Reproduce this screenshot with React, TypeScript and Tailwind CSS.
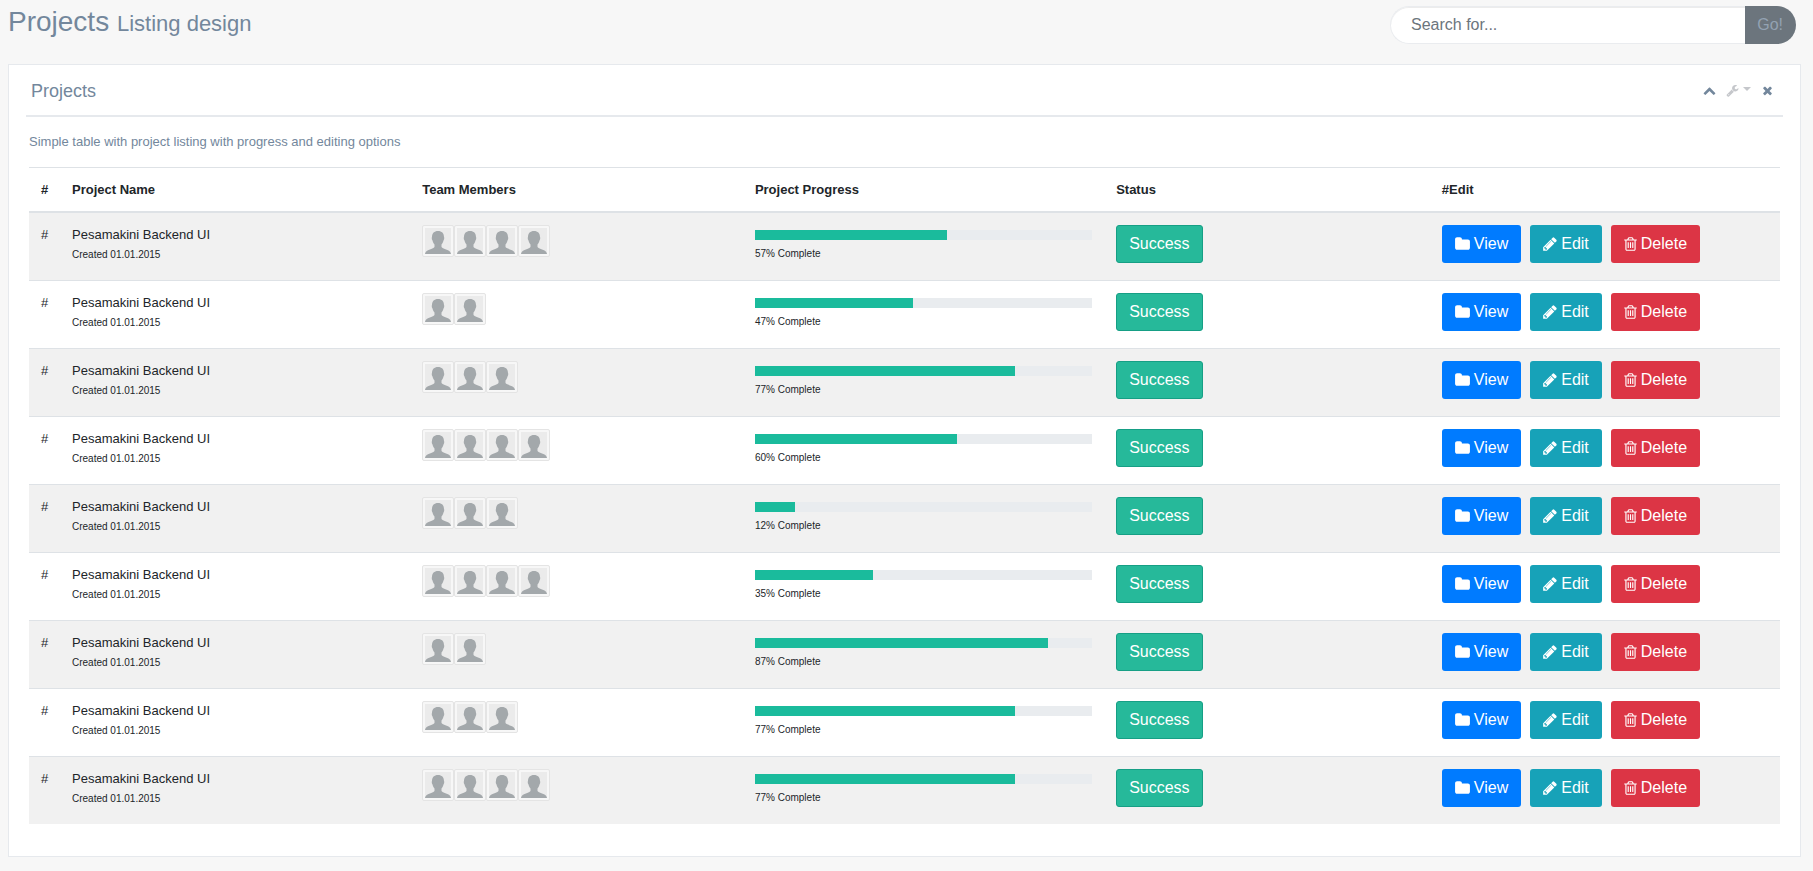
import React from "react";

type IconProps = { viewBox: string; path: string; className?: string };

function Glyph({ viewBox, path, className }: IconProps) {
  return (
    <svg viewBox={viewBox} className={className} fill="currentColor" aria-hidden="true">
      <path d={path} />
    </svg>
  );
}

const FOLDER =
  "M1728 608v704q0 92-66 158t-158 66h-1216q-92 0-158-66t-66-158v-960q0-92 66-158t158-66h320q92 0 158 66t66 158v32h672q92 0 158 66t66 158z";
const PENCIL =
  "M491 1536l91-91-235-235-91 91v107h128v128h107zm523-928q0-22-22-22-10 0-17 7l-542 542q-7 7-7 17 0 22 22 22 10 0 17-7l542-542q7-7 7-17zm-54-192l416 416-832 832h-416v-416zm683 96q0 53-37 90l-166 166-416-416 166-165q36-38 90-38 53 0 91 38l235 234q37 39 37 91z";
const TRASH =
  "M704 736v576q0 14-9 23t-23 9h-64q-14 0-23-9t-9-23v-576q0-14 9-23t23-9h64q14 0 23 9t9 23zm256 0v576q0 14-9 23t-23 9h-64q-14 0-23-9t-9-23v-576q0-14 9-23t23-9h64q14 0 23 9t9 23zm256 0v576q0 14-9 23t-23 9h-64q-14 0-23-9t-9-23v-576q0-14 9-23t23-9h64q14 0 23 9t9 23zm128 724v-948h-896v948q0 22 7 40.5t14.5 27 10.5 8.5h832q3 0 10.5-8.5t14.5-27 7-40.5zm-672-1076h448l-48-117q-7-9-17-11h-317q-10 2-17 11zm928 32v64q0 14-9 23t-23 9h-96v948q0 83-47 143.5t-113 60.5h-832q-66 0-113-58.5t-47-141.5v-952h-96q-14 0-23-9t-9-23v-64q0-14 9-23t23-9h309l70-167q15-37 54-63t79-26h320q40 0 79 26t54 63l70 167h309q14 0 23 9t9 23z";
const CHEVRON_UP =
  "M1683 1331l-166 165q-19 19-45 19t-45-19l-531-531-531 531q-19 19-45 19t-45-19l-166-165q-19-19-19-45.5t19-45.5l742-741q19-19 45-19t45 19l742 741q19 19 19 45.5t-19 45.5z";
const WRENCH =
  "M448 1472q0-26-19-45t-45-19-45 19-19 45 19 45 45 19 45-19 19-45zm644-420l-682 682q-37 37-90 37-52 0-91-37l-106-108q-38-36-38-90 0-53 38-91l681-681q39 98 114.5 173.5t173.5 114.5zm634-435q0 39-23 106-47 134-164.5 217.5t-258.5 83.5q-185 0-316.5-131.5t-131.5-316.5 131.5-316.5 316.5-131.5q58 0 121.5 16.5t107.5 46.5q16 11 16 28t-16 28l-293 169v224l193 107q5-3 79-48.5t135.5-81 70.5-35.5q15 0 23.5 10t8.5 25z";
const TIMES =
  "M1490 1322q0 40-28 68l-136 136q-28 28-68 28t-68-28l-294-294-294 294q-28 28-68 28t-68-28l-136-136q-28-28-28-68t28-68l294-294-294-294q-28-28-28-68t28-68l136-136q28-28 68-28t68 28l294 294 294-294q28-28 68-28t68 28l136 136q28 28 28 68t-28 68l-294 294 294 294q28 28 28 68z";

type Project = { members: number; progress: number };

const projects: Project[] = [
  { members: 4, progress: 57 },
  { members: 2, progress: 47 },
  { members: 3, progress: 77 },
  { members: 4, progress: 60 },
  { members: 3, progress: 12 },
  { members: 4, progress: 35 },
  { members: 2, progress: 87 },
  { members: 3, progress: 77 },
  { members: 4, progress: 77 },
];

function Avatar() {
  return (
    <li className="size-8 rounded-xs border border-[#e4e4e4] bg-[#f7f7f7] p-0.5">
      <svg viewBox="0 0 26 26" className="block size-full bg-[#ebebeb]" role="img" aria-label="Avatar">
        <path
          fill="#a3a8ab"
          d="M13 3C16.8 3 19 5.3 19 9C19.4 9.4 19.3 11.5 18.6 12.2C18.2 14 17.3 15.6 16.5 16.6V19C17.5 20.6 20.5 20.9 23 22.2C25 23.2 25.8 24.5 26 26H0C.2 24.5 1 23.2 3 22.2C5.5 20.9 8.5 20.6 9.5 19V16.6C8.7 15.6 7.8 14 7.4 12.2C6.7 11.5 6.6 9.4 7 9C7 5.3 9.2 3 13 3Z"
        />
      </svg>
    </li>
  );
}

const button =
  "inline-flex h-[38px] items-center gap-1 rounded-[3px] text-base leading-6 whitespace-nowrap text-white";

function ProjectRow({ project }: { project: Project }) {
  return (
    <tr className="align-top odd:bg-[#f1f1f1] not-first:[&>td]:border-t not-first:[&>td]:border-[#dee2e6] [&>td]:p-3">
      <td>#</td>
      <td>
        <a href="#project" className="block">Pesamakini Backend UI</a>
        <small className="mt-px block text-[10px] leading-[19px]">Created 01.01.2015</small>
      </td>
      <td>
        <ul className="flex">
          {Array.from({ length: project.members }, (_, i) => (
            <Avatar key={i} />
          ))}
        </ul>
      </td>
      <td>
        <div className="mt-[5px] mb-1 h-2.5 bg-[#e9ecef]">
          <div className="h-full bg-[#1abb9c]" style={{ width: `${project.progress}%` }} />
        </div>
        <small className="block text-[10px] leading-[19px]">{project.progress}% Complete</small>
      </td>
      <td>
        <button type="button" className={`${button} border border-[#169f85] bg-[#26b99a] px-3`}>
          Success
        </button>
      </td>
      <td>
        <div className="mb-[5px] flex gap-[9px]">
          <button type="button" className={`${button} bg-[#007bff] px-[13px]`}>
            <Glyph viewBox="64 0 1664 1792" path={FOLDER} className="h-4 w-[15px]" />
            View
          </button>
          <button type="button" className={`${button} bg-[#17a2b8] px-[13px]`}>
            <Glyph viewBox="128 0 1536 1792" path={PENCIL} className="h-4 w-3.5" />
            Edit
          </button>
          <button type="button" className={`${button} bg-[#dc3545] px-[13px]`}>
            <Glyph viewBox="192 0 1408 1792" path={TRASH} className="h-4 w-[13px]" />
            Delete
          </button>
        </div>
      </td>
    </tr>
  );
}

export default function App() {
  return (
    <main className="min-h-screen bg-[#f7f7f7] pr-3 pb-3 pl-2 font-['Liberation_Sans',Arial,sans-serif] text-[13px] leading-[19px] text-[#73879c]">
      <header className="flex h-16 items-start justify-between pt-1.5 pr-[5px]">
        <h1 className="text-[28px] leading-8">
          Projects <small className="text-[22px]">Listing design</small>
        </h1>
        <form className="flex w-[406px]" onSubmit={(e) => e.preventDefault()}>
          <input
            type="text"
            aria-label="Search for"
            placeholder="Search for..."
            className="h-[38px] min-w-0 flex-1 rounded-l-full border border-r-0 border-[#eaecef] bg-white pl-5 text-base shadow-[inset_0_1px_0_rgba(0,0,0,0.075)] outline-none placeholder:text-[#6c757d]"
          />
          <button type="submit" className="h-[38px] rounded-r-full bg-[#6c757d] pr-[13px] pl-3 text-base text-[#93a2b2]">
            Go!
          </button>
        </form>
      </header>

      <section className="border border-[#e6e9ed] bg-white px-[17px] pt-2.5 pb-4">
        <div className="flex h-[42px] items-start justify-between border-b-2 border-[#e6e9ed] px-[5px]">
          <h2 className="pt-1 text-lg leading-6">Projects</h2>
          <div className="flex items-center pt-[9px] pr-1">
            <button type="button" aria-label="Collapse">
              <Glyph viewBox="0 0 1792 1792" path={CHEVRON_UP} className="size-[13px]" />
            </button>
            <button type="button" aria-label="Settings" className="ml-2.5 flex items-center gap-1 text-[#c5c7cb]">
              <Glyph viewBox="0 0 1792 1792" path={WRENCH} className="size-[13px]" />
              <svg viewBox="0 0 8 4" className="mb-1 h-1 w-2" fill="currentColor" aria-hidden="true">
                <path d="M0 0H8L4 4Z" />
              </svg>
            </button>
            <button type="button" aria-label="Close" className="ml-2.5">
              <Glyph viewBox="0 0 1792 1792" path={TIMES} className="size-[13px]" />
            </button>
          </div>
        </div>

        <div className="px-[3px] pt-[15px]">
          <p className="mb-4">Simple table with project listing with progress and editing options</p>
          <table className="mb-4 w-full table-fixed border-separate border-spacing-0 text-[#212529]">
            <thead>
              <tr className="text-left [&>th]:border-t [&>th]:border-b-2 [&>th]:border-[#dee2e6] [&>th]:p-3 [&>th]:font-bold">
                <th className="w-[31px]">#</th>
                <th className="w-[20%]">Project Name</th>
                <th className="w-[19%]">Team Members</th>
                <th>Project Progress</th>
                <th className="w-[18.6%]">Status</th>
                <th className="w-[20%]">#Edit</th>
              </tr>
            </thead>
            <tbody>
              {projects.map((project, i) => (
                <ProjectRow key={i} project={project} />
              ))}
            </tbody>
          </table>
        </div>
      </section>
    </main>
  );
}
